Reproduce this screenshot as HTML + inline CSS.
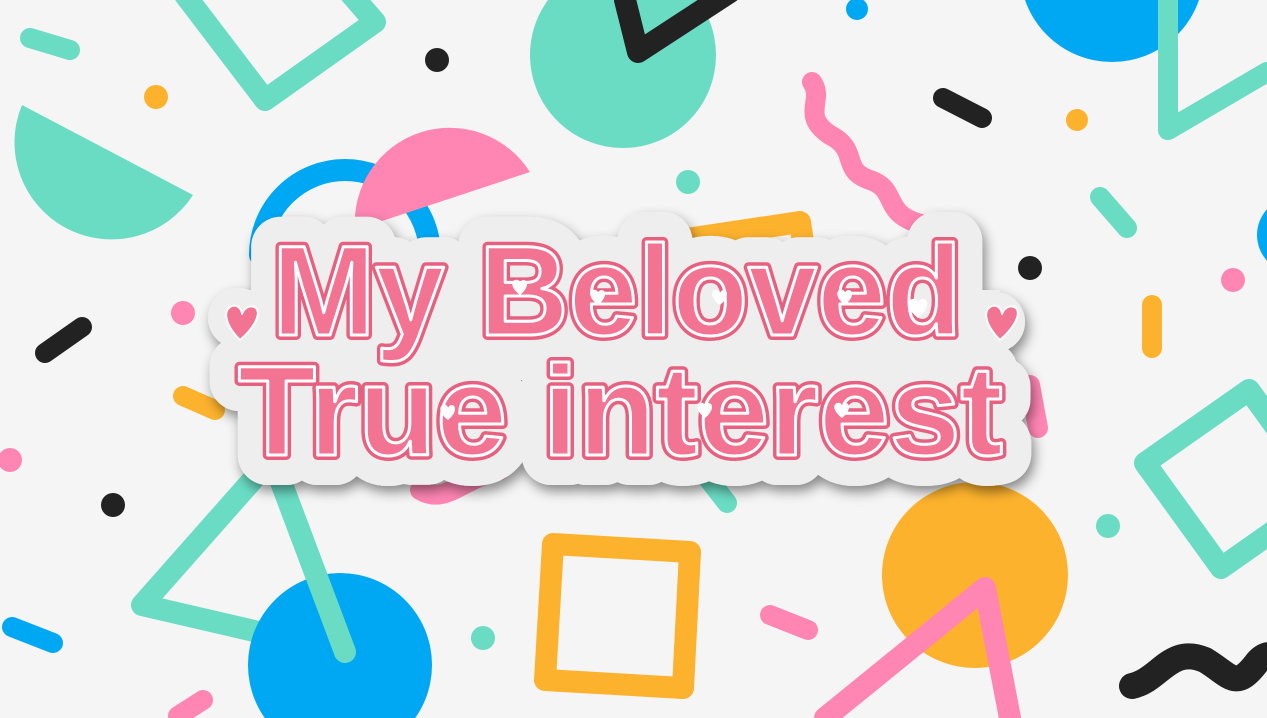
<!DOCTYPE html>
<html><head><meta charset="utf-8"><style>
html,body{margin:0;padding:0;background:#f5f5f5;overflow:hidden;width:1267px;height:718px}
svg{display:block;position:absolute;left:0;top:0}
</style></head><body>
<svg width="1267" height="718" viewBox="0 0 1267 718" xmlns="http://www.w3.org/2000/svg">
<defs>
<filter id="sh" x="-10%" y="-20%" width="120%" height="140%">
<feDropShadow dx="3" dy="6" stdDeviation="6" flood-color="#000" flood-opacity="0.45"/>
</filter>
</defs>
<rect width="1267" height="718" fill="#f5f5f5"/>
<g fill="none" stroke-linecap="round" stroke-linejoin="round" stroke-width="22">
<line x1="30" y1="38" x2="70" y2="50" stroke="#6adcc4" stroke-width="20"/>
<polyline points="185,-5 265,100 375,22 330,-30" stroke="#6adcc4"/>
<polyline points="1168,0 1168,130 1267,72" stroke="#6adcc4" stroke-width="20"/>
<path d="M812,82 C825,100 800,115 830,135 C860,150 840,170 870,180 C900,190 880,215 925,225" stroke="#ff85b3" stroke-width="20"/>
<line x1="943" y1="98" x2="982" y2="118" stroke="#222" stroke-width="20"/>
<line x1="1100" y1="197" x2="1127" y2="228" stroke="#6adcc4" stroke-width="20"/>
<path d="M260,255 A85,85 0 0 1 430,255" stroke="#00a8f3" stroke-width="22"/>
<polyline points="680,240 800,222 810,290" stroke="#fdb22d"/>
<line x1="1152" y1="305" x2="1152" y2="348" stroke="#fdb22d" stroke-width="20"/>
<line x1="45" y1="353" x2="82" y2="327" stroke="#222" stroke-width="20"/>
<line x1="183" y1="396" x2="215" y2="410" stroke="#fdb22d" stroke-width="20"/>
<polygon points="142,605 272,458 345,652" stroke="#6adcc4"/>
<line x1="12" y1="627" x2="53" y2="643" stroke="#00a8f3" stroke-width="20"/>
<line x1="178" y1="716" x2="203" y2="700" stroke="#ff85b3" stroke-width="20"/>
<polygon points="1145,463 1249,390 1325,495 1221,568" stroke="#6adcc4"/>
<path d="M1132,686 C1160,680 1170,645 1205,660 C1230,675 1235,690 1255,665 C1260,658 1265,655 1270,655" stroke="#222" stroke-width="26"/>
<line x1="770" y1="615" x2="808" y2="630" stroke="#ff85b3" stroke-width="20"/>
<path d="M420,490 C445,505 460,480 500,470" stroke="#ff85b3" stroke-width="20"/>
<line x1="703" y1="472" x2="727" y2="503" stroke="#6adcc4" stroke-width="20"/>
<line x1="1030" y1="385" x2="1038" y2="428" stroke="#ff85b3" stroke-width="20"/>
</g>
<g>
<circle cx="623" cy="55" r="93" fill="#6adcc4"/>
<polyline points="625,0 638,52 730,-8" fill="none" stroke="#222" stroke-width="22" stroke-linecap="round" stroke-linejoin="round"/>
<circle cx="1112" cy="-30" r="92" fill="#00a8f3"/>
<polyline points="1168,0 1168,130 1267,72" fill="none" stroke="#6adcc4" stroke-width="20" stroke-linecap="round" stroke-linejoin="round"/>
<path d="M22,105 L193,195 A97,97 0 0 1 22,105 Z" fill="#6adcc4"/>
<path d="M355,230 A95,95 0 0 1 530,172 Z" fill="#ff85b3"/>
<circle cx="156" cy="97" r="12" fill="#fdb22d"/>
<circle cx="437" cy="60" r="12" fill="#222"/>
<circle cx="857" cy="9" r="11" fill="#00a8f3"/>
<circle cx="1077" cy="120" r="11" fill="#fdb22d"/>
<circle cx="688" cy="182" r="12" fill="#6adcc4"/>
<circle cx="1030" cy="268" r="12" fill="#222"/>
<circle cx="1233" cy="280" r="12" fill="#ff85b3"/>
<circle cx="1295" cy="235" r="38" fill="#00a8f3"/>
<circle cx="183" cy="313" r="12" fill="#ff85b3"/>
<circle cx="10" cy="460" r="12" fill="#ff85b3"/>
<circle cx="113" cy="505" r="12" fill="#222"/>
<circle cx="340" cy="665" r="92" fill="#00a8f3"/>
<polyline points="272,458 345,652" fill="none" stroke="#6adcc4" stroke-width="22" stroke-linecap="round"/>
<circle cx="483" cy="638" r="12" fill="#6adcc4"/>
<circle cx="1108" cy="526" r="12" fill="#6adcc4"/>
<circle cx="975" cy="575" r="93" fill="#fdb22d"/>
<polyline points="825,718 985,588 1010,718" fill="none" stroke="#ff85b3" stroke-width="22" stroke-linejoin="round" stroke-linecap="round"/>
<polygon points="553,544 690,552 683,688 545,680" fill="none" stroke="#fdb22d" stroke-width="22" stroke-linejoin="round"/>
</g>
<g font-family="'Liberation Sans', 'DejaVu Sans', sans-serif" font-weight="bold" stroke-linejoin="round">
<g filter="url(#sh)">
<text x="272" y="335" font-size="128" textLength="690" lengthAdjust="spacingAndGlyphs" fill="#eeeeee" stroke="#eeeeee" stroke-width="60">My Beloved</text>
<text x="238" y="455" font-size="128" textLength="765" lengthAdjust="spacingAndGlyphs" fill="#eeeeee" stroke="#eeeeee" stroke-width="60">True interest</text>
<rect x="240" y="290" width="760" height="90" fill="#eeeeee"/>
<circle cx="238" cy="318" r="30" fill="#eeeeee"/>
<circle cx="995" cy="322" r="30" fill="#eeeeee"/>
</g>
<text x="272" y="335" font-size="128" textLength="690" lengthAdjust="spacingAndGlyphs" fill="#f27392" stroke="#e8607f" stroke-width="10">My Beloved</text>
<text x="272" y="335" font-size="128" textLength="690" lengthAdjust="spacingAndGlyphs" fill="#f27392" stroke="#ffffff" stroke-width="3">My Beloved</text>
<text x="238" y="455" font-size="128" textLength="765" lengthAdjust="spacingAndGlyphs" fill="#f27392" stroke="#e8607f" stroke-width="10">True interest</text>
<text x="238" y="455" font-size="128" textLength="765" lengthAdjust="spacingAndGlyphs" fill="#f27392" stroke="#ffffff" stroke-width="3">True interest</text>
<g fill="#f27392" stroke="#fff" stroke-width="2">
<path d="M240,340 C225,325 222,310 232,306 C238,304 242,310 242,314 C244,308 250,304 256,308 C262,315 252,330 240,340 Z"/>
<path d="M1000,340 C985,325 982,310 992,306 C998,304 1002,310 1002,314 C1004,308 1010,304 1016,308 C1022,315 1012,330 1000,340 Z"/>
</g>
<g fill="#ffffff">
<path d="M520,295 c-8,-6 -10,-13 -5,-15 c3,-1 5,1 5,3 c1,-3 4,-4 6,-2 c3,4 -1,10 -6,14z"/>
<path d="M598,305 c-8,-6 -10,-13 -5,-15 c3,-1 5,1 5,3 c1,-3 4,-4 6,-2 c3,4 -1,10 -6,14z"/>
<path d="M720,305 c-8,-6 -10,-13 -5,-15 c3,-1 5,1 5,3 c1,-3 4,-4 6,-2 c3,4 -1,10 -6,14z"/>
<path d="M845,305 c-8,-6 -10,-13 -5,-15 c3,-1 5,1 5,3 c1,-3 4,-4 6,-2 c3,4 -1,10 -6,14z"/>
<path d="M918,318 c-10,-8 -13,-16 -6,-19 c4,-1 6,1 6,4 c1,-4 5,-5 8,-3 c4,5 -1,12 -8,18z"/>
<path d="M448,420 c-8,-6 -10,-13 -5,-15 c3,-1 5,1 5,3 c1,-3 4,-4 6,-2 c3,4 -1,10 -6,14z"/>
<path d="M705,418 c-8,-6 -10,-13 -5,-15 c3,-1 5,1 5,3 c1,-3 4,-4 6,-2 c3,4 -1,10 -6,14z"/>
<path d="M842,418 c-8,-6 -10,-13 -5,-15 c3,-1 5,1 5,3 c1,-3 4,-4 6,-2 c3,4 -1,10 -6,14z"/>
</g>
</g>
</svg>
</body></html>
